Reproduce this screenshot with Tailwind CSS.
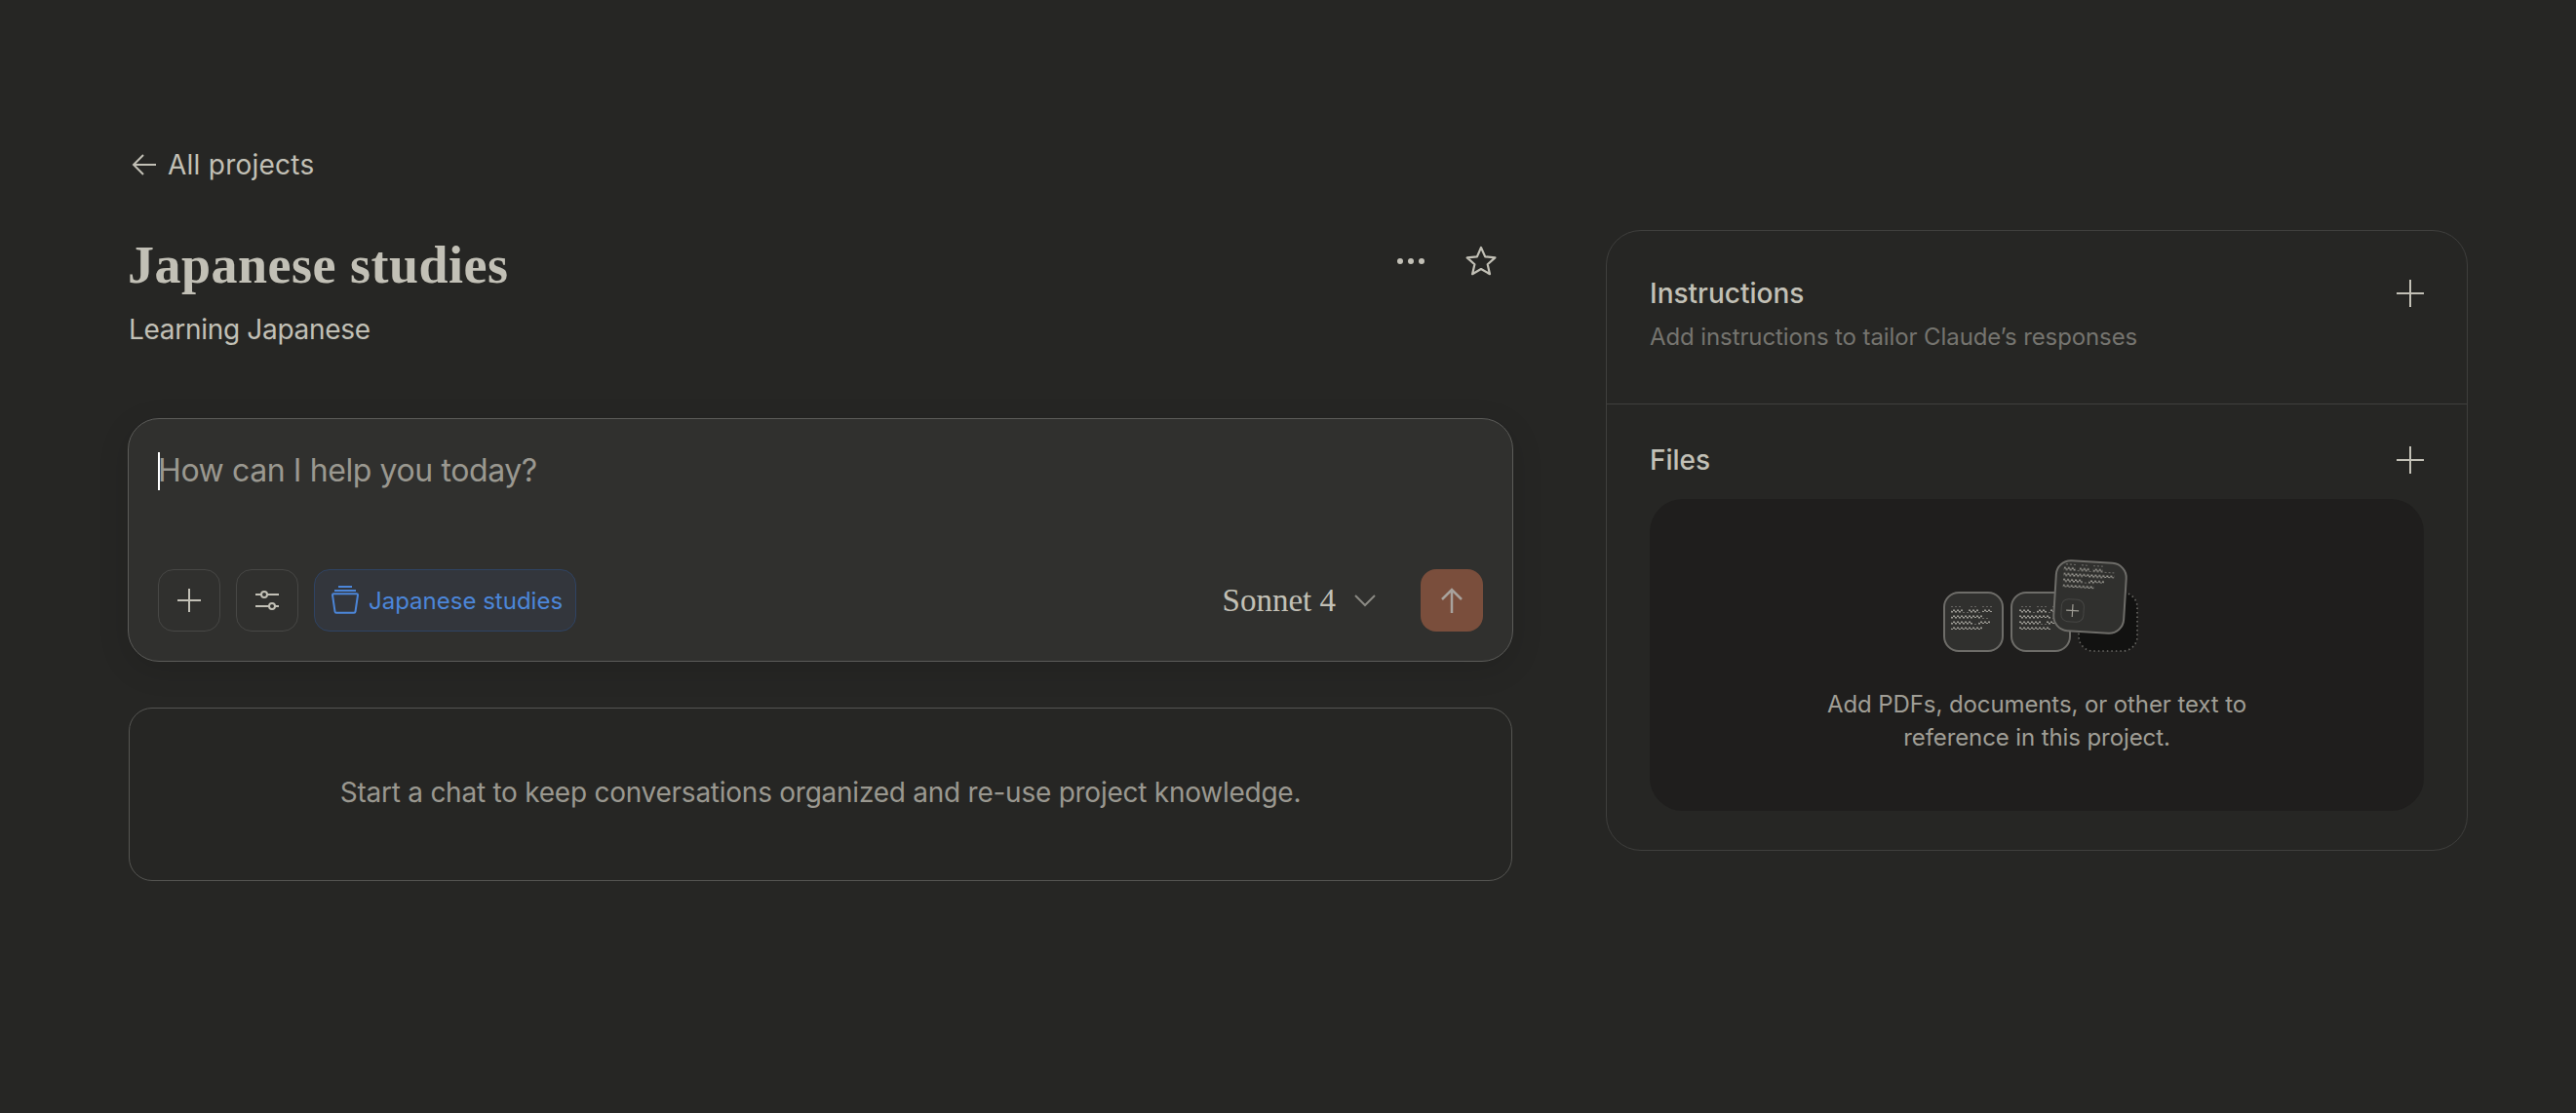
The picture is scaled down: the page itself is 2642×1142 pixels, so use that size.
<!DOCTYPE html>
<html lang="en">
  <head>
    <meta charset="UTF-8" />
    <title>Japanese studies</title>
    <script src="https://cdn.jsdelivr.net/npm/@tailwindcss/browser@4"></script>
  </head>
  <body class="bg-[#262624] font-['Inter',sans-serif] text-[#c2c0b6] overflow-hidden">
    <main class="flex h-[1142px] gap-[95px] pl-[131px] pt-[149px]">
      <!-- Left column -->
      <section class="w-[1421px]">
        <a class="flex h-10 items-center gap-[11px] pl-1 text-[28px] tracking-[0.25px]">
          <svg class="w-[26px] h-[26px]" viewBox="0 0 26 26" fill="none" stroke="#c2c0b6" stroke-width="2"><path d="M25 13H2M12 3 2 13l10 10" /></svg>
          <span>All projects</span>
        </a>

        <div class="mt-[53px] flex items-start justify-between pr-[17px]">
          <h1 class="font-['Liberation_Serif',serif] font-bold text-[54px] leading-[60px] tracking-[0.5px]">Japanese studies</h1>
          <div class="flex h-[52px] items-center gap-[42px]">
            <svg class="w-7 h-2" viewBox="0 0 28 8" fill="#c2c0b6"><circle cx="3" cy="4" r="3" /><circle cx="14" cy="4" r="3" /><circle cx="25" cy="4" r="3" /></svg>
            <svg class="w-8 h-8" viewBox="0 0 32 32" fill="none" stroke="#c2c0b6" stroke-width="2.2" stroke-linejoin="round"><path d="M16 2l4.2 9.4 10.2 1-7.700 6.800 2.300 10L16 24l-8.900 5.200 2.300-10-7.700-6.800 10.200-1z" /></svg>
          </div>
        </div>
        <p class="mt-4 h-10 leading-10 text-[28px] tracking-[-0.3px] pl-px">Learning Japanese</p>

        <!-- Chat input -->
        <div class="relative mt-[71px] h-[250px] rounded-[32px] border border-[#5c5c59] bg-[#30302e] px-[30px] pt-[31px] shadow-[0_8px_32px_rgba(0,0,0,0.12)]">
          <div class="flex h-[44px] items-center text-[32px] tracking-[-0.4px] text-[#9a9890]">
            <span class="h-[39px] w-0.5 bg-white"></span>
            <span class="-ml-[2px]">How can I help you today?</span>
          </div>
          <div class="mt-[79px] flex items-center justify-between">
            <div class="flex items-center gap-4">
              <button class="flex h-16 w-16 items-center justify-center rounded-2xl border border-[#474745]">
                <svg class="w-6 h-6" viewBox="0 0 24 24" stroke="#c2c0b6" stroke-width="2"><path d="M12 0v24M0 12h24" /></svg>
              </button>
              <button class="flex h-16 w-16 items-center justify-center rounded-2xl border border-[#474745]">
                <svg class="w-6 h-6" viewBox="0 0 24 24" fill="none" stroke="#c2c0b6" stroke-width="2"><path d="M0 6h6M12 6h12M0 18h14M20 18h4" /><circle cx="9" cy="6" r="3" /><circle cx="17" cy="18" r="3" /></svg>
              </button>
              <button class="flex h-16 w-[269px] items-center gap-[8px] rounded-2xl border border-[#2f4363] bg-[#33363c] pl-[15px] text-[24px] whitespace-nowrap text-[#4c86d9]">
                <svg class="w-[32px] h-[32px] shrink-0" viewBox="0 0 32 32" fill="none" stroke="#4c86d9" stroke-width="2"><path d="M9 2h14M5 6h22" /><path d="M3 10.500c0-.800.500-1.300 1.300-1.300h23.400c.800 0 1.300.500 1.300 1.300l-2.500 17c-.100.800-.600 1.300-1.400 1.300H6.900c-.800 0-1.300-.500-1.400-1.300z" /></svg>
                <span class="pt-px">Japanese studies</span>
              </button>
            </div>
            <div class="flex items-center">
              <span class="pt-[2px] font-['Liberation_Serif',serif] text-[33px]">Sonnet 4</span>
              <svg class="ml-[19px] w-[22px] h-[14px]" viewBox="0 0 22 14" fill="none" stroke="#8a8983" stroke-width="2"><path d="M1 2l10 10L21 2" /></svg>
              <button class="ml-[46px] flex h-16 w-16 items-center justify-center rounded-2xl bg-[#7a4e3c]">
                <svg class="w-6 h-[26px]" viewBox="0 0 24 26" fill="none" stroke="#a8a29c" stroke-width="2.500"><path d="M12 26V2M2 12 12 2l10 10" /></svg>
              </button>
            </div>
          </div>
        </div>

        <div class="mx-px mt-[47px] flex h-[178px] items-center justify-center rounded-3xl border border-[#555552] pb-1 text-[28px] tracking-[-0.25px] text-[#9a9890]">
          Start a chat to keep conversations organized and re-use project knowledge.
        </div>
      </section>

      <!-- Project knowledge -->
      <aside class="mt-[87px] h-[637px] w-[884px] rounded-[36px] border border-[#3f3f3d]">
        <div class="h-[178px] border-b border-[#3f3f3d] px-[44px] pt-[44px]">
          <div class="flex h-10 items-center justify-between">
            <h2 class="text-[28px] font-medium">Instructions</h2>
            <svg class="w-7 h-7" viewBox="0 0 28 28" stroke="#c2c0b6" stroke-width="2"><path d="M14 0v28M0 14h28" /></svg>
          </div>
          <p class="mt-[7px] text-[24px] tracking-[-0.1px] text-[#75746f]">Add instructions to tailor Claude’s responses</p>
        </div>
        <div class="px-[44px] pt-[37px]">
          <div class="flex h-10 items-center justify-between">
            <h2 class="text-[28px] font-medium">Files</h2>
            <svg class="w-7 h-7" viewBox="0 0 28 28" stroke="#c2c0b6" stroke-width="2"><path d="M14 0v28M0 14h28" /></svg>
          </div>
          <div class="mt-5 h-[320px] rounded-[34px] bg-[#1f1e1d] pt-[58px] text-center text-[24px] leading-[34px] tracking-[-0.1px] text-[#a09e96]">
            <svg class="mx-auto block" width="220" height="105" viewBox="1980 570 220 105" fill="none">
              <defs>
                <pattern id="wave" patternUnits="userSpaceOnUse" width="4" height="6">
                  <path d="M0 3q1-3 2 0t2 0" fill="none" stroke="#b0aea6" stroke-width="1" />
                </pattern>
              </defs>
              <rect x="2133" y="608" width="60" height="60" rx="15" fill="#121211" stroke="#6b6a66" stroke-width="1.600" stroke-dasharray="1.500 3" />
              <g fill="#30302e" stroke="#6e6d69" stroke-width="2">
                <rect x="1995" y="608" width="60" height="60" rx="15" />
                <rect x="2064" y="608" width="60" height="60" rx="15" />
              </g>
              <g fill="url(#wave)">
                <rect x="2002" y="622" width="12" height="6" /><rect x="2020" y="622" width="10" height="6" /><rect x="2034" y="622" width="10" height="6" />
                <rect x="2002" y="628" width="32" height="6" />
                <rect x="2002" y="634" width="22" height="6" /><rect x="2030" y="634" width="12" height="6" />
                <rect x="2002" y="640" width="32" height="6" />
                <rect x="2072" y="622" width="12" height="6" /><rect x="2090" y="622" width="10" height="6" /><rect x="2104" y="622" width="10" height="6" />
                <rect x="2072" y="628" width="32" height="6" />
                <rect x="2072" y="634" width="22" height="6" /><rect x="2100" y="634" width="12" height="6" />
                <rect x="2072" y="640" width="32" height="6" />
              </g>
              <g transform="rotate(3.500 2144.500 612.500)">
                <rect x="2108.500" y="576.500" width="72" height="72" rx="15" fill="#30302e" stroke="#6e6d69" stroke-width="2" />
                <g fill="url(#wave)">
                  <rect x="2116" y="580" width="12" height="6" /><rect x="2132" y="580" width="10" height="6" /><rect x="2146" y="580" width="10" height="6" />
                  <rect x="2116" y="586" width="52" height="6" />
                  <rect x="2116" y="592" width="20" height="6" /><rect x="2142" y="592" width="16" height="6" />
                  <rect x="2116" y="598" width="32" height="6" />
                </g>
                <rect x="2116" y="616" width="23" height="23" rx="7" fill="#30302e" stroke="#474745" stroke-width="1" />
                <path d="M2127.500 621v13M2121 627.500h13" stroke="#a09e96" stroke-width="1.200" />
              </g>
            </svg>
            <p class="mt-[31px]">Add PDFs, documents, or other text to<br />reference in this project.</p>
          </div>
        </div>
      </aside>
    </main>
  </body>
</html>
